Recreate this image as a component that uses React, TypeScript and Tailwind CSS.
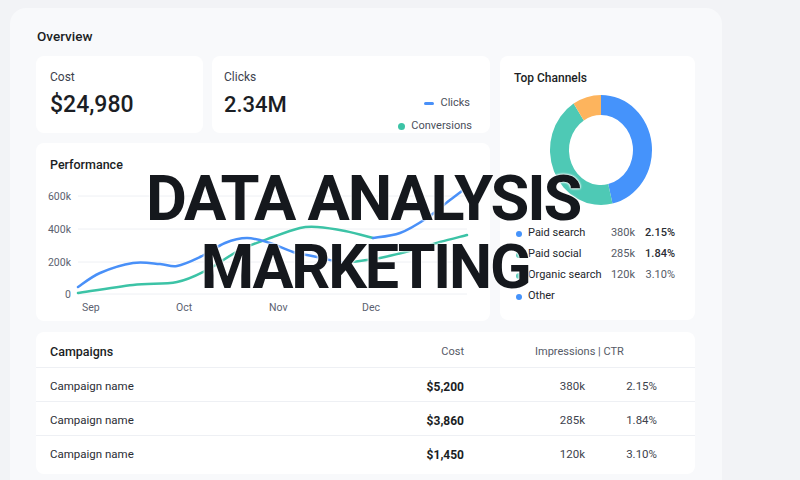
import React from "react";

type P = [number, number];

function smooth(pts: P[]): string {
  let d = `M${pts[0][0]},${pts[0][1]}`;
  for (let i = 0; i < pts.length - 1; i++) {
    const p0 = pts[i - 1] || pts[i];
    const p1 = pts[i];
    const p2 = pts[i + 1];
    const p3 = pts[i + 2] || p2;
    const c1x = p1[0] + (p2[0] - p0[0]) / 6;
    const c1y = p1[1] + (p2[1] - p0[1]) / 6;
    const c2x = p2[0] - (p3[0] - p1[0]) / 6;
    const c2y = p2[1] - (p3[1] - p1[1]) / 6;
    d += ` C${c1x.toFixed(1)},${c1y.toFixed(1)} ${c2x.toFixed(1)},${c2y.toFixed(1)} ${p2[0]},${p2[1]}`;
  }
  return d;
}

function arc(cx: number, cy: number, rx: number, ry: number, irx: number, iry: number, a0: number, a1: number) {
  const r = (deg: number) => (deg * Math.PI) / 180;
  const pt = (ax: number, ay: number, a: number) => [cx + ax * Math.sin(r(a)), cy - ay * Math.cos(r(a))];
  const large = a1 - a0 > 180 ? 1 : 0;
  const [x0, y0] = pt(rx, ry, a0);
  const [x1, y1] = pt(rx, ry, a1);
  const [x2, y2] = pt(irx, iry, a1);
  const [x3, y3] = pt(irx, iry, a0);
  return `M${x0},${y0} A${rx},${ry} 0 ${large} 1 ${x1},${y1} L${x2},${y2} A${irx},${iry} 0 ${large} 0 ${x3},${y3} Z`;
}

const blueA: P[] = [[78, 287], [100, 273], [133, 263], [160, 264], [177, 266], [200, 257], [225, 243], [247, 238], [270, 243], [293, 252], [317, 257], [340, 262], [352, 262]];
const blueB: P[] = [[373, 238], [400, 233], [427, 218], [450, 200], [467, 187]];
const tealA: P[] = [[78, 293], [133, 285], [177, 282], [207, 270], [240, 250], [273, 237], [300, 228], [317, 227], [345, 231], [373, 238]];
const tealB: P[] = [[352, 262], [380, 258], [413, 250], [440, 242], [467, 235]];

const BLUE = "#4990f8";
const TEAL = "#3cc3a6";

function Chart() {
  return (
    <svg width="454" height="140" className="block" style={{ fontFamily: "Roboto, sans-serif" }}>
      <g transform="translate(-36,-180)">
        {[196, 229, 262, 294].map((y) => (
          <line key={y} x1="78" x2="467" y1={y} y2={y} stroke="#eef0f4" strokeWidth="1" />
        ))}
        {[
          ["600k", 196],
          ["400k", 229],
          ["200k", 262],
          ["0", 294],
        ].map(([t, y]) => (
          <text key={t as string} x="71" y={(y as number) + 3.5} textAnchor="end" fontSize="10.5" fill="#5b6170">
            {t}
          </text>
        ))}
        {[
          ["Sep", 82],
          ["Oct", 176],
          ["Nov", 269],
          ["Dec", 362],
        ].map(([t, x]) => (
          <text key={t as string} x={x as number} y="311" fontSize="10.5" fill="#5b6170">
            {t}
          </text>
        ))}
        <path d={smooth(tealA)} fill="none" stroke={TEAL} strokeWidth="2.5" strokeLinecap="round" />
        <path d={smooth(tealB)} fill="none" stroke={TEAL} strokeWidth="2.5" strokeLinecap="round" />
        <path d={smooth(blueA)} fill="none" stroke={BLUE} strokeWidth="2.5" strokeLinecap="round" />
        <path d={smooth(blueB)} fill="none" stroke={BLUE} strokeWidth="2.5" strokeLinecap="round" />
      </g>
    </svg>
  );
}

function Donut() {
  const cx = 52, cy = 55;
  return (
    <svg width="104" height="112" className="block">
      <path d={arc(cx, cy, 51, 55, 32, 35, 0, 167)} fill="#4593fb" />
      <path d={arc(cx, cy, 51, 55, 32, 35, 167, 327.5)} fill="#4ec9b5" />
      <path d={arc(cx, cy, 51, 55, 32, 35, 327.5, 360)} fill="#fdb45d" />
    </svg>
  );
}

const channels = [
  { name: "Paid search", color: "#4593fb", v: "380k", p: "2.15%", bold: true },
  { name: "Paid social", color: "#4ec9b5", v: "285k", p: "1.84%", bold: true },
  { name: "Organic search", color: "#4ec9b5", v: "120k", p: "3.10%", bold: false },
  { name: "Other", color: "#4593fb", v: "", p: "", bold: false },
];

const campaigns = [
  { cost: "$5,200", imp: "380k", ctr: "2.15%" },
  { cost: "$3,860", imp: "285k", ctr: "1.84%" },
  { cost: "$1,450", imp: "120k", ctr: "3.10%" },
];

export default function App() {
  return (
    <div
      className="relative w-[800px] h-[480px] overflow-hidden bg-[#f2f3f6] pt-[8px] pl-[10px] text-[#1b1e24]"
      style={{ fontFamily: "Roboto, 'Noto Sans', sans-serif" }}
    >
      <div className="w-[712px] h-[500px] rounded-[16px] bg-[#f8f9fb] pl-[26px] pr-[27px] pt-[20px]">
        <div className="text-[13.5px] font-medium leading-[16px] pl-[1px] mb-[12px]">Overview</div>
        <div className="flex gap-[10px]">
          <div className="flex flex-col w-[454px] gap-[10px]">
            <div className="flex gap-[9px] h-[77px]">
              <div className="w-[167px] rounded-[8px] bg-white pl-[14px] pt-[14px]">
                <div className="text-[12px] leading-[14px] text-[#3d424d]">Cost</div>
                <div className="text-[23px] leading-[26px] font-medium mt-[8px]">$24,980</div>
              </div>
              <div className="flex-1 rounded-[8px] bg-white pl-[12px] pt-[14px] flex">
                <div className="flex-1">
                  <div className="text-[12px] leading-[14px] text-[#3d424d]">Clicks</div>
                  <div className="text-[22px] leading-[26px] font-medium mt-[8px]">2.34M</div>
                </div>
                <div className="flex flex-col items-end pr-[20px] pt-[26px] gap-[9px] text-[11px] leading-[14px] text-[#4a4f5b]">
                  <div className="flex items-center gap-[6px]">
                    <span className="inline-block w-[10px] h-[3px] rounded-full bg-[#4990f8]" />
                    <span>Clicks</span>
                  </div>
                  <div className="flex items-center gap-[6px] -mr-[2px]">
                    <span className="inline-block w-[7px] h-[7px] rounded-full bg-[#3cc3a6]" />
                    <span>Conversions</span>
                  </div>
                </div>
              </div>
            </div>
            <div className="h-[178px] rounded-[8px] bg-white pt-[14px]">
              <div className="pl-[14px] text-[12.5px] font-medium leading-[15px]">Performance</div>
              <div className="mt-[8px]">
                <Chart />
              </div>
            </div>
          </div>
          <div className="w-[195px] h-[264px] rounded-[8px] bg-white pt-[15px]">
            <div className="pl-[14px] text-[12px] font-medium leading-[15px]">Top Channels</div>
            <div className="ml-[49px] mt-[9px]">
              <Donut />
            </div>
            <div className="mt-[16px] flex flex-col">
              {channels.map((c) => (
                <div key={c.name} className="flex items-center h-[21px] text-[11px] pl-[16px]">
                  <span className="inline-block w-[6px] h-[6px] rounded-full mr-[6px]" style={{ background: c.color }} />
                  <span className="w-[80px] text-[#23262d]">{c.name}</span>
                  <span className="w-[27px] text-right text-[#555a66]">{c.v}</span>
                  <span className={`w-[40px] text-right ${c.bold ? "font-medium text-[#2a2d34]" : "text-[#555a66]"}`}>{c.p}</span>
                </div>
              ))}
            </div>
          </div>
        </div>
        <div className="mt-[11px] h-[142px] rounded-[8px] bg-white flex flex-col text-[11.5px]">
          <div className="flex items-center h-[36px] pt-[6px] border-b border-[#eef0f4]">
            <div className="flex-1 pl-[14px] text-[12.5px] font-medium">Campaigns</div>
            <div className="w-[84px] text-right text-[#555a66] text-[11px]">Cost</div>
            <div className="w-[231px] pl-[71px] text-[#555a66] text-[11px]">Impressions | CTR</div>
          </div>
          {campaigns.map((c, i) => (
            <div key={i} className={`flex items-center h-[34px] pt-[4px] ${i < 2 ? "border-b border-[#eef0f4]" : ""}`}>
              <div className="flex-1 pl-[14px] text-[#2a2d34]">Campaign name</div>
              <div className="w-[84px] text-right font-bold text-[12px]">{c.cost}</div>
              <div className="w-[121px] text-right text-[#3d424d]">{c.imp}</div>
              <div className="w-[72px] text-right text-[#3d424d]">{c.ctr}</div>
              <div className="w-[38px]" />
            </div>
          ))}
        </div>
      </div>
      <div className="absolute left-0 top-[165px] w-[730px] text-center leading-[68px] font-bold text-[#15181d] [text-shadow:0_0_2px_#fff,0_0_2px_#fff,0_0_3px_#fff]">
        <div className="text-[63px] tracking-[-0.035em] -ml-[4px]">DATA ANALYSIS</div>
        <div className="text-[61px] tracking-[-0.035em] pl-[0px]">MARKETING</div>
      </div>
    </div>
  );
}
